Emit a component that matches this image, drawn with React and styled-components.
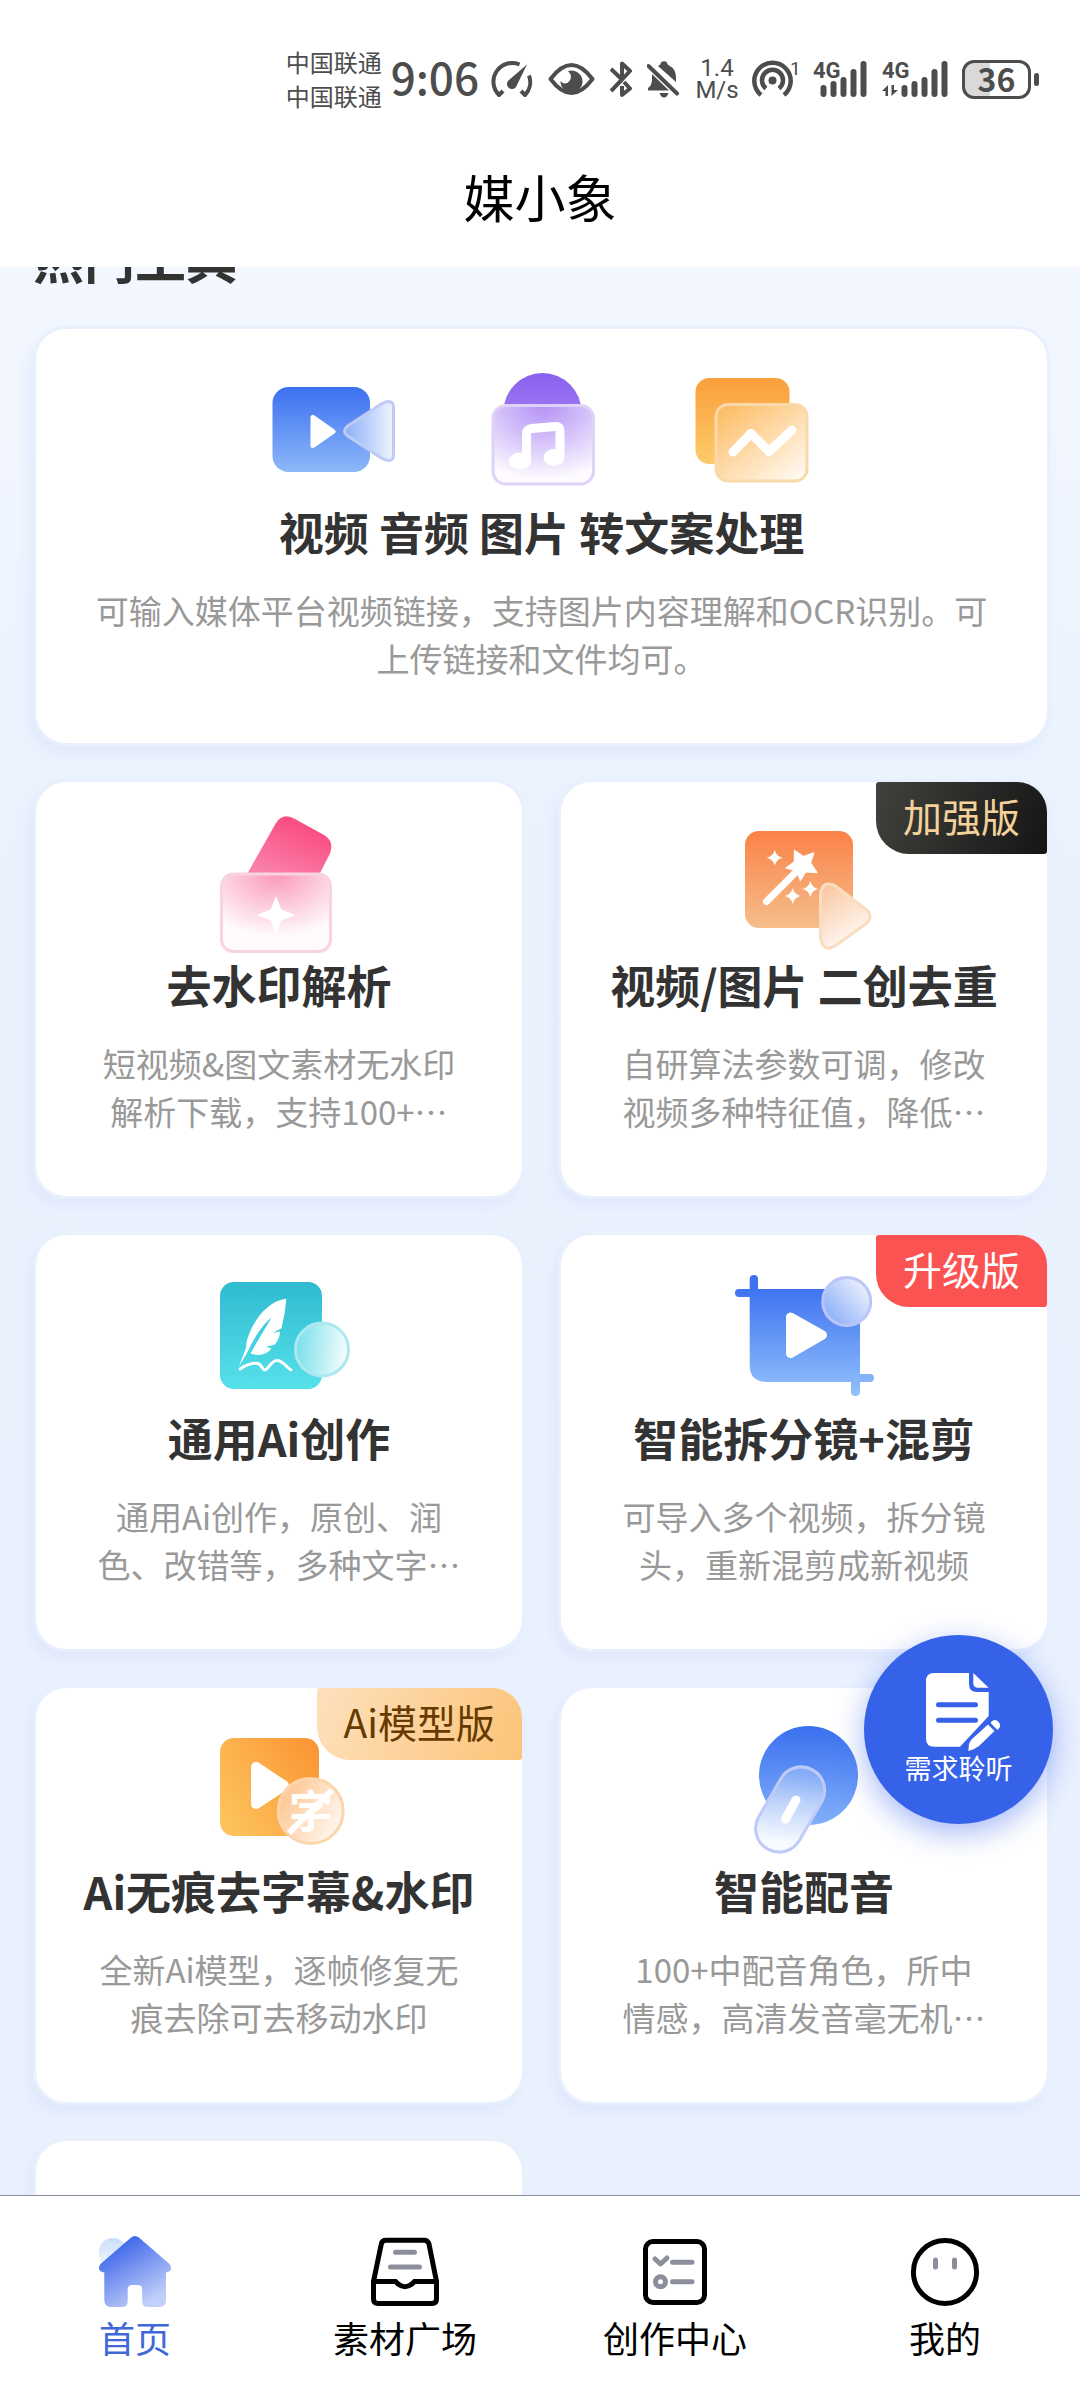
import React, { useLayoutEffect, useRef } from "react";
import styled, { createGlobalStyle, css } from "styled-components";

const GlobalStyle = createGlobalStyle`
  * {
    box-sizing: border-box;
  }
  body {
    margin: 0;
    background-color: white;
    font-family: "Noto Sans CJK SC", "Noto Sans", sans-serif;
  }
  a {
    color: inherit;
    text-decoration: none;
  }
  svg {
    display: block;
    flex-shrink: 0;
  }
`;

const Screen = styled.div`
  position: relative;
  display: flex;
  flex-direction: column;
  height: 100vh;
`;

const Header = styled.header`
  flex-shrink: 0;
  padding: 45px 0 35px;
  background-color: white;
`;

const StatusBar = styled.div`
  display: flex;
  align-items: center;
  justify-content: flex-end;
  gap: 12px;
  padding-right: 41px;
  color: #4d4d4d;
`;

const Clock = styled.div`
  display: flex;
  align-items: center;
  gap: 9px;
`;

const Carriers = styled.div`
  font-size: 24px;
  line-height: 34px;
`;

const Time = styled.span`
  padding-bottom: 6px;
  font-size: 44px;
  font-weight: 500;
  line-height: 62px;
`;

const Speed = styled.div`
  width: 46px;
  font-family: Roboto, sans-serif;
  font-size: 24px;
  line-height: 22px;
  text-align: center;
`;

const Battery = styled.div`
  display: flex;
  align-items: center;
  gap: 3px;
  &::after {
    content: "";
    width: 5px;
    height: 13px;
    border-radius: 3px;
    background-color: #4d4d4d;
  }
`;

const BatteryLevel = styled.span`
  width: 69px;
  padding-bottom: 3px;
  border: 3px solid #4d4d4d;
  border-radius: 12px;
  background: linear-gradient(90deg, #d9d9d9 40%, white 40%);
  font-size: 32px;
  font-weight: 700;
  line-height: 30px;
  text-align: center;
`;

const PageTitle = styled.h1`
  margin: 47px 0 0;
  color: black;
  font-size: 51px;
  font-weight: 400;
  line-height: 72px;
  text-align: center;
`;

const Content = styled.main`
  flex: 1;
  min-height: 0;
  padding: 0 30px 33px 33px;
  overflow-y: auto;
  scrollbar-width: none;
  background: linear-gradient(180deg, #f3f7ff 0%, #ebf2fe 30%, #eaf1fe 100%);
`;

const SectionTitle = styled.h2`
  margin: 0 0 36px;
  color: #333;
  font-size: 51px;
  font-weight: 700;
  line-height: 66px;
`;

const ToolGrid = styled.div`
  display: grid;
  grid-template-columns: 1fr 1fr;
  gap: 33px;
`;

const Card = styled.a`
  position: relative;
  display: flex;
  flex-direction: column;
  align-items: center;
  min-height: 420px;
  padding: 24px 59px 60px;
  border: 3px solid #e8f0fe;
  border-radius: 33px;
  background-color: white;
  background-clip: padding-box;
  box-shadow: -5px 8px 12px rgba(205, 218, 248, 0.35);
  ${({ $wide }) =>
    $wide &&
    css`
      grid-column: 1 / -1;
    `}
`;

const Icons = styled.div`
  display: flex;
  gap: 60px;
`;

const CardTitle = styled.h3`
  margin: 0 -40px;
  color: #333;
  font-size: 45px;
  font-weight: 700;
  line-height: 58px;
  white-space: nowrap;
`;

const CardText = styled.p`
  margin: 25px 0 0;
  color: #999;
  font-size: 33px;
  line-height: 48px;
  text-align: center;
`;

const badgeColors = {
  dark: css`
    background: linear-gradient(110deg, #41423d, #151515);
    color: #f3d19b;
  `,
  red: css`
    background: #fb5252;
    color: white;
  `,
  gold: css`
    background: linear-gradient(110deg, #fee0bd, #fbc478);
    color: #663a00;
  `
};

const Badge = styled.span`
  position: absolute;
  top: 0;
  right: 0;
  padding: 0 27px 6px;
  border-radius: 3px 30px 3px 33px;
  font-size: 39px;
  line-height: 66px;
  ${({ $color }) => badgeColors[$color]}
`;

const FeedbackButton = styled.button`
  position: absolute;
  right: 27px;
  bottom: 576px;
  display: flex;
  flex-direction: column;
  align-items: center;
  width: 189px;
  height: 189px;
  padding: 37px 0 0;
  border: none;
  border-radius: 50%;
  background-color: #3662ea;
  box-shadow: 0 9px 30px rgba(54, 98, 234, 0.45);
  color: white;
  font-family: inherit;
  font-size: 27px;
  line-height: 32px;
`;

const TabBar = styled.nav`
  flex-shrink: 0;
  display: flex;
  border-top: 1px solid #8a8d9e;
  background-color: white;
`;

const Tab = styled.a`
  flex: 1;
  display: flex;
  flex-direction: column;
  align-items: center;
  gap: 8px;
  padding: 40px 0 42px;
  font-size: 36px;
  line-height: 42px;
  && {
    color: ${({ $active }) => ($active ? "#4067d8" : "black")};
  }
`;

function Gradient({ id, from, to, x2 = 0, y2 = 1 }) {
  return (
    <linearGradient id={id} x1="0" y1="0" x2={x2} y2={y2}>
      <stop offset="0" stopColor={from} />
      <stop offset="1" stopColor={to} />
    </linearGradient>
  );
}

// 150 x 150 illustration used on the tool cards
function Art({ children }) {
  return (
    <svg width="150" height="150" viewBox="0 0 150 150" fill="none" aria-hidden="true">
      {children}
    </svg>
  );
}

function VideoArt() {
  return (
    <Art>
      <defs>
        <Gradient id="video" from="#3c70f0" to="#8cb8f9" />
        <Gradient id="videoLens" from="#8aaff7" to="#f0f4ff" x2={1} y2={0} />
      </defs>
      <rect x="15.500" y="34" width="97.500" height="85" rx="16" fill="url(#video)" />
      <path d="M56 64.500v28l20-14z" fill="white" stroke="white" strokeWidth="5" strokeLinejoin="round" />
      <path
        d="M90 73.500Q85 78 90 82.500L125 105.500Q136.500 111 136.500 101V55Q136.500 45 125 50.500Z"
        fill="url(#videoLens)"
        stroke="#bfcaf5"
        strokeWidth="3"
      />
    </Art>
  );
}

function AudioArt() {
  return (
    <Art>
      <defs>
        <Gradient id="disc" from="#8860ee" to="#b48ef6" />
        <radialGradient id="audioGlass" cx="0.5" cy="0" r="0.95">
          <stop offset="0" stopColor="#b493f5" />
          <stop offset="0.45" stopColor="#d3bff9" />
          <stop offset="1" stopColor="#fdfbff" />
        </radialGradient>
      </defs>
      <circle cx="75.500" cy="59" r="39" fill="url(#disc)" />
      <rect x="26" y="52.500" width="100.500" height="78.500" rx="13" fill="url(#audioGlass)" stroke="#dfd2f7" strokeWidth="3" />
      <path d="M59.500 107V81Q59.500 76 65 75.500L88 73.500Q93 73 93 78V104" stroke="white" strokeWidth="9" />
      <ellipse cx="53" cy="108" rx="11" ry="8.500" fill="white" />
      <ellipse cx="87" cy="104.500" rx="10.500" ry="8.500" fill="white" />
    </Art>
  );
}

function ImageArt() {
  return (
    <Art>
      <defs>
        <Gradient id="photo" from="#fb9f3c" to="#fccb6b" />
        <Gradient id="photoGlass" from="#fdb95c" to="#fffaf2" x2={0.9} y2={1} />
      </defs>
      <rect x="18.500" y="25" width="94" height="86" rx="14" fill="url(#photo)" />
      <rect x="39" y="51.500" width="91" height="76.500" rx="12" fill="url(#photoGlass)" stroke="#f9d8a9" strokeWidth="3" />
      <path d="M56 99L74 80.500L92 98.500L115 77" stroke="white" strokeWidth="9" strokeLinecap="round" strokeLinejoin="round" />
    </Art>
  );
}

function WatermarkArt() {
  return (
    <Art>
      <defs>
        <linearGradient id="pink" x1="0.8" y1="0" x2="0.2" y2="1">
          <stop offset="0.2" stopColor="#fa4f82" />
          <stop offset="1" stopColor="#f982ac" />
        </linearGradient>
        <radialGradient id="pinkGlass" cx="0.5" cy="0" r="0.8">
          <stop offset="0" stopColor="#fa98b9" />
          <stop offset="0.35" stopColor="#fcbcd0" />
          <stop offset="1" stopColor="#fffafc" />
        </radialGradient>
      </defs>
      <path d="M43.700 67L72 17Q79 6 91 13L120 29Q130.500 35 126 47.500L116 67Z" fill="url(#pink)" />
      <rect x="17.500" y="68" width="109" height="77.500" rx="12" fill="url(#pinkGlass)" stroke="#f9d3df" strokeWidth="3" />
      <path d="M72 90L77.500 103.500L91 109L77.500 114.500L72 128L66.500 114.500L53 109L66.500 103.500Z" fill="white" />
    </Art>
  );
}

function WandArt() {
  return (
    <Art>
      <defs>
        <Gradient id="wand" from="#fb8248" to="#f5be8b" />
        <Gradient id="wandGlass" from="#f9c39b" to="#fffaf6" x2={0.5} />
      </defs>
      <rect x="16" y="25" width="108" height="97" rx="14" fill="url(#wand)" />
      <path d="M37.500 95.500L68 65" stroke="white" strokeWidth="7" strokeLinecap="round" />
      <path
        d="M65.300 44L74.300 50.300L85 46.700L81.700 56.700L88.300 66.700L77 66L71.300 74.700L67.300 64.700L56.700 62L65.300 55.700Z"
        fill="white"
        stroke="white"
        strokeLinejoin="round"
      />
      {[[45.7, 51.7], [63.7, 90], [81.3, 83]].map(([x, y]) => (
        <path
          key={x}
          transform={`translate(${x} ${y})`}
          d="M0 -8Q1.500 -1.500 8 0Q1.500 1.500 0 8Q-1.500 1.500 -8 0Q-1.500 -1.500 0 -8Z"
          fill="white"
        />
      ))}
      <path
        d="M91.500 88Q93 74 106 79.500L138 104Q144 111 138 117L106 140Q94 147 91.500 132Z"
        fill="url(#wandGlass)"
        stroke="#fadcc0"
        strokeWidth="3"
      />
    </Art>
  );
}

function WritingArt() {
  return (
    <Art>
      <defs>
        <Gradient id="teal" from="#2fbbd0" to="#56e1eb" />
        <Gradient id="tealGlass" from="#72dee9" to="#f3fcfd" x2={1} y2={0.1} />
      </defs>
      <rect x="16" y="23" width="102" height="107" rx="14" fill="url(#teal)" />
      <path
        d="M82.300 39.700C62 42 47 65 42.500 83L42 89L34.700 108L44 92Q54 70 67.700 58.300Q57 76 46.500 94.500Q60 99 67.500 89.500L62 87.800L71 85.500Q76 79 76 72.500L68.500 74L77.500 69.300Q81.500 54 82.300 39.700Z"
        fill="white"
      />
      <path
        d="M36 110Q46 103.500 54 104.500C58 106 58 111 61 111C64 111 67 101.500 73 101.500C79 101.500 82 108 87 111"
        stroke="white"
        strokeWidth="3"
        strokeLinecap="round"
      />
      <circle cx="118" cy="90.500" r="26.500" fill="url(#tealGlass)" stroke="#ade8f1" strokeWidth="3" />
    </Art>
  );
}

function CutArt() {
  return (
    <Art>
      <defs>
        <linearGradient id="cut" gradientUnits="userSpaceOnUse" x1="0" y1="16" x2="0" y2="137">
          <stop offset="0.1" stopColor="#3e72f1" />
          <stop offset="1" stopColor="#92c1fb" />
        </linearGradient>
        <linearGradient id="cutGlass" x1="0.2" y1="0.8" x2="0.9" y2="0.2">
          <stop offset="0" stopColor="#94b6f8" />
          <stop offset="1" stopColor="#e9effe" />
        </linearGradient>
      </defs>
      <path
        d="M20.700 20Q20.700 16 25 16Q29 16 29 20V30H131V115H141Q145 115 145 119Q145 123 141 123H131V133Q131 137 126.500 137Q122 137 122 133V123H38Q20.700 123 20.700 106V38H10Q6 38 6 34Q6 30 10 30H20.700Z"
        fill="url(#cut)"
      />
      <path d="M61.500 58V94.500L93.500 76Z" fill="white" stroke="white" strokeWidth="9" strokeLinejoin="round" />
      <circle cx="117.700" cy="42.500" r="24" fill="url(#cutGlass)" stroke="#bcc5f7" strokeWidth="3" />
    </Art>
  );
}

function SubtitleArt() {
  return (
    <Art>
      <defs>
        <linearGradient id="subtitle" x1="1" y1="0.2" x2="0" y2="0.8">
          <stop offset="0" stopColor="#fb9736" />
          <stop offset="1" stopColor="#fdc35c" />
        </linearGradient>
        <Gradient id="subtitleGlass" from="#fdbf84" to="#fff5ec" x2={1} y2={0.6} />
      </defs>
      <rect x="16" y="26" width="99" height="98" rx="14" fill="url(#subtitle)" />
      <path d="M52 55V92L80 73.500Z" fill="white" stroke="white" strokeWidth="10" strokeLinejoin="round" />
      <circle cx="106.700" cy="99" r="32.500" fill="url(#subtitleGlass)" stroke="#fcd5ac" strokeWidth="3" />
      <text x="107" y="116" textAnchor="middle" fill="white" fontSize="44" fontWeight="700">
        字
      </text>
      <path d="M85 121L128 78" stroke="white" strokeWidth="6" />
    </Art>
  );
}

function VoiceArt() {
  return (
    <Art>
      <defs>
        <Gradient id="voice" from="#3a70f0" to="#82b0f9" />
        <linearGradient id="voiceGlass" x1="0.3" y1="0" x2="0.5" y2="0.9">
          <stop offset="0.1" stopColor="#85acf7" />
          <stop offset="0.5" stopColor="#bfd4fb" />
          <stop offset="1" stopColor="#f7faff" />
        </linearGradient>
      </defs>
      <circle cx="79.500" cy="63.500" r="49.500" fill="url(#voice)" />
      <rect
        x="37.700"
        y="52"
        width="47"
        height="91"
        rx="23.500"
        transform="rotate(30 61.200 97.400)"
        fill="url(#voiceGlass)"
        stroke="#bfcaf8"
        strokeWidth="3"
      />
      <path d="M67 88L56.500 107" stroke="white" strokeWidth="9" strokeLinecap="round" />
    </Art>
  );
}

function NoteIcon() {
  return (
    <svg width="85" height="80" viewBox="-10 0 85 80" fill="white" aria-hidden="true">
      <path d="M8 1H43V12Q43 20 51 20H62.700V44L34 74.700H8Q0 74.700 0 66.700V9Q0 1 8 1Z" />
      <path d="M47.300 1L62.700 15.700H52Q47.300 15.700 47.300 11Z" />
      <path d="M12.500 32.700H49.500M12.500 48.300H49.500" stroke="#3662ea" strokeWidth="5" strokeLinecap="round" />
      <path d="M42.300 79L43 72Q44 69 46 67L62 52.500L68.500 59L53 74Q48 78 42.300 79Z" />
      <path d="M65 50Q69 46 72.500 50Q76 54 72 57.500L71 57.500L65 51.500Z" />
    </svg>
  );
}

function TabIcon({ children }) {
  return (
    <svg
      width="72"
      height="72"
      viewBox="0 0 72 72"
      fill="none"
      stroke="black"
      strokeWidth="5"
      strokeLinecap="round"
      aria-hidden="true"
    >
      {children}
    </svg>
  );
}

function HomeIcon() {
  return (
    <TabIcon>
      <defs>
        <Gradient id="home" from="#1f4fe6" to="#c3cff9" x2={0.6} />
        <Gradient id="sun" from="#cbdffa" to="#f0f6ff" />
      </defs>
      <circle cx="14" cy="16.500" r="14.500" fill="url(#sun)" stroke="none" />
      <path
        d="M31.500 2Q36 -2 40.500 2L70.500 28Q75 35 67 36.500V64Q67 71 60 71H48Q43.200 71 43.200 65V54Q43.200 49 39 49H33Q28.700 49 28.700 54V65Q28.700 71 23 71H12Q5.300 71 5.300 64V36.500Q-3 35 1.500 28Z"
        fill="url(#home)"
        stroke="none"
      />
    </TabIcon>
  );
}

function TrayIcon() {
  return (
    <TabIcon>
      <path d="M4.500 45.500V63Q4.500 67.500 9 67.500H63Q67.500 67.500 67.500 63V45.500L60 8Q59 4.200 55 4.200H17Q13 4.200 12.300 8Z" />
      <path d="M4.500 45.500H26.500Q36 56 45.500 45.500H67.500" />
      <path d="M26.500 16.300H45.500M21.500 31H50.500" stroke="#8d8e9b" />
    </TabIcon>
  );
}

function ListIcon() {
  return (
    <TabIcon>
      <rect x="6.500" y="5.500" width="59" height="61" rx="7.500" />
      <g stroke="#8d8e9b">
        <path d="M16 23L21.500 28L28 22M33.500 26.300H53M33.500 45.700H53" strokeLinejoin="round" />
        <circle cx="21.500" cy="45.700" r="5" />
      </g>
    </TabIcon>
  );
}

function FaceIcon() {
  return (
    <TabIcon>
      <circle cx="36" cy="36" r="31.600" />
      <path d="M26.500 24V31M45.500 24V31" stroke="#8d8e9b" />
    </TabIcon>
  );
}

function GaugeIcon() {
  return (
    <svg width="45" height="37" viewBox="0 0 45 37" fill="none" stroke="currentColor" strokeWidth="4" aria-hidden="true">
      <path d="M28.500 3.500A18.700 18.700 0 0 0 8 34L12 30M38 14.500A18.700 18.700 0 0 1 34 34L30 30" strokeLinejoin="round" />
      <path d="M36 3.500L25.500 25A5 5 0 1 1 18 19Z" fill="currentColor" stroke="none" />
    </svg>
  );
}

function EyeIcon() {
  return (
    <svg width="50" height="36" viewBox="0 0 50 36" fill="none" stroke="currentColor" strokeWidth="4" aria-hidden="true">
      <path d="M2.500 18Q13 4 23.500 4Q34 4 44.500 18Q34 32 23.500 32Q13 32 2.500 18Z" strokeLinejoin="round" />
      <path d="M20 10A11 11 0 1 1 12.500 20Q17 25 21.500 20Q25 15 20 10Z" fill="currentColor" stroke="none" />
    </svg>
  );
}

function BluetoothIcon() {
  return (
    <svg width="25" height="37" viewBox="0 0 25 37" fill="none" stroke="currentColor" strokeWidth="4" aria-hidden="true">
      <path d="M1 8L12 18.500L20 10L12 2.500V16M1 30L12 18.500M12 25V34L20 27.500L14 21" strokeLinejoin="round" />
    </svg>
  );
}

function BellOffIcon() {
  return (
    <svg width="35" height="37" viewBox="0 0 35 37" fill="currentColor" aria-hidden="true">
      <path d="M11 5Q14 3.500 14 1.500Q17 -1 20 1.500Q20 3.500 22 4.500Q29 8 29 16V21Z" />
      <path d="M5 13L22 29.500H1V27Q5 24 5 19Z" />
      <path d="M12.500 32H21.500Q20 36.500 17 36.500Q14 36.500 12.500 32Z" />
      <path d="M1.500 5L30 32.500" stroke="currentColor" strokeWidth="4" strokeLinecap="round" />
    </svg>
  );
}

function HotspotIcon() {
  return (
    <svg width="49" height="46" viewBox="0 -4 49 46" fill="none" stroke="currentColor" strokeWidth="4.500" aria-hidden="true">
      <path d="M9 35A18.200 18.200 0 1 1 32 35M14 28.500A10.500 10.500 0 1 1 27 28.500" />
      <circle cx="20.500" cy="20.500" r="4" fill="currentColor" stroke="none" />
      <text x="38" y="15" fill="currentColor" stroke="none" fontFamily="Roboto, sans-serif" fontSize="19">
        1
      </text>
    </svg>
  );
}

function SignalIcon({ arrows }) {
  const width = arrows ? 68 : 57;
  const start = arrows ? 22.5 : 10.5;
  return (
    <svg width={width} height="46" viewBox={`0 -4 ${width} 46`} fill="currentColor" aria-hidden="true">
      <text x="0" y="18" fontFamily="Roboto, sans-serif" fontSize="22" fontWeight="700">
        4G
      </text>
      {[25, 21, 17, 9, 1].map((top, index) => (
        <path
          key={top}
          d={`M${start + index * 10} ${top + 3}V34`}
          stroke="currentColor"
          strokeWidth="6"
          strokeLinecap="round"
        />
      ))}
      {arrows && <path d="M6 25V36H3.500V31H0ZM9.500 25H12V30H16L9.500 36Z" />}
    </svg>
  );
}

const tools = [
  {
    title: "视频 音频 图片 转文案处理",
    text: "可输入媒体平台视频链接，支持图片内容理解和OCR识别。可上传链接和文件均可。",
    art: [VideoArt, AudioArt, ImageArt],
    wide: true
  },
  {
    title: "去水印解析",
    text: "短视频&图文素材无水印解析下载，支持100+…",
    art: [WatermarkArt]
  },
  {
    title: "视频/图片 二创去重",
    text: "自研算法参数可调，修改视频多种特征值，降低…",
    art: [WandArt],
    badge: "加强版",
    color: "dark"
  },
  {
    title: "通用Ai创作",
    text: "通用Ai创作，原创、润色、改错等，多种文字…",
    art: [WritingArt]
  },
  {
    title: "智能拆分镜+混剪",
    text: "可导入多个视频，拆分镜头，重新混剪成新视频",
    art: [CutArt],
    badge: "升级版",
    color: "red"
  },
  {
    title: "Ai无痕去字幕&水印",
    text: "全新Ai模型，逐帧修复无痕去除可去移动水印",
    art: [SubtitleArt],
    badge: "Ai模型版",
    color: "gold"
  },
  {
    title: "智能配音",
    text: "100+中配音角色，所中情感，高清发音毫无机…",
    art: [VoiceArt]
  }
];

const tabs = [
  { label: "首页", icon: HomeIcon },
  { label: "素材广场", icon: TrayIcon },
  { label: "创作中心", icon: ListIcon },
  { label: "我的", icon: FaceIcon }
];

function ToolCard({ title, text, art, badge, color, wide }) {
  return (
    <Card href="#tool" $wide={wide}>
      {badge && <Badge $color={color}>{badge}</Badge>}
      <Icons>
        {art.map((Picture, index) => (
          <Picture key={index} />
        ))}
      </Icons>
      <CardTitle>{title}</CardTitle>
      <CardText>{text}</CardText>
    </Card>
  );
}

function App() {
  const content = useRef(null);

  // the list opens with its heading half scrolled under the header
  useLayoutEffect(() => {
    content.current.scrollTop = 43;
  }, []);

  return (
    <Screen lang="zh-CN">
      <GlobalStyle />
      <Header>
        <StatusBar>
          <Clock>
            <Carriers>
              <div>中国联通</div>
              <div>中国联通</div>
            </Carriers>
            <Time>9:06</Time>
          </Clock>
          <GaugeIcon />
          <EyeIcon />
          <BluetoothIcon />
          <BellOffIcon />
          <Speed>
            <div>1.4</div>
            <div>M/s</div>
          </Speed>
          <HotspotIcon />
          <SignalIcon />
          <SignalIcon arrows />
          <Battery>
            <BatteryLevel>36</BatteryLevel>
          </Battery>
        </StatusBar>
        <PageTitle>媒小象</PageTitle>
      </Header>
      <Content ref={content}>
        <SectionTitle>热门工具</SectionTitle>
        <ToolGrid>
          {tools.map(tool => (
            <ToolCard key={tool.title} {...tool} />
          ))}
          <Card as="div" />
        </ToolGrid>
      </Content>
      <FeedbackButton type="button">
        <NoteIcon />
        需求聆听
      </FeedbackButton>
      <TabBar>
        {tabs.map(({ label, icon: Icon }, index) => (
          <Tab key={label} href="#tab" $active={index === 0}>
            <Icon />
            {label}
          </Tab>
        ))}
      </TabBar>
    </Screen>
  );
}

export default App;
